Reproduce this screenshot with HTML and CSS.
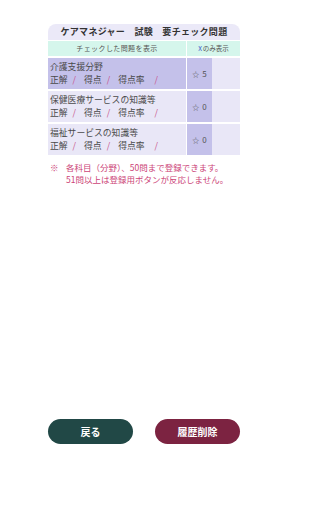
FILE: index.html
```html
<!DOCTYPE html>
<html lang="ja">
<head>
<meta charset="utf-8">
<link rel="stylesheet" href="styles.css">
</head>
<body>
<div class="page">
  <div class="panel">
    <div class="title">ケアマネジャー　試験　要チェック問題</div>
    <div class="head">
      <div class="head-left">チェックした問題を表示</div>
      <div class="head-right"><span class="x">X</span>のみ表示</div>
    </div>
    <div class="row selected">
      <div class="cell-main">
        <div class="name">介護支援分野</div>
        <div class="stats"><span>正解</span><span class="sl s1">/</span><span>得点</span><span class="sl s1">/</span><span>得点率</span><span class="sl s2">/</span></div>
      </div>
      <div class="cell-star"><span class="star">☆</span><span class="num">5</span></div>
      <div class="cell-end"></div>
    </div>
    <div class="row">
      <div class="cell-main">
        <div class="name">保健医療サービスの知識等</div>
        <div class="stats"><span>正解</span><span class="sl s1">/</span><span>得点</span><span class="sl s1">/</span><span>得点率</span><span class="sl s2">/</span></div>
      </div>
      <div class="cell-star"><span class="star">☆</span><span class="num">0</span></div>
      <div class="cell-end"></div>
    </div>
    <div class="row">
      <div class="cell-main">
        <div class="name">福祉サービスの知識等</div>
        <div class="stats"><span>正解</span><span class="sl s1">/</span><span>得点</span><span class="sl s1">/</span><span>得点率</span><span class="sl s2">/</span></div>
      </div>
      <div class="cell-star"><span class="star">☆</span><span class="num">0</span></div>
      <div class="cell-end"></div>
    </div>
  </div>
  <div class="note">
    <span class="mark">※</span>
    <div class="note-text">
      <div class="note-line">各科目（分野）、50問まで登録できます。</div>
      <div class="note-line">51問以上は登録用ボタンが反応しません。</div>
    </div>
  </div>
  <div class="buttons">
    <button class="btn back">戻る</button>
    <button class="btn del">履歴削除</button>
  </div>
</div>
</body>
</html>
```

FILE: styles.css
```css
html, body {
  margin: 0;
  padding: 0;
  background: #ffffff;
}
body {
  font-family: "Noto Sans CJK JP", "Noto Sans", sans-serif;
  color: #4a4a4a;
}
.page {
  width: 288px;
  height: 512px;
  box-sizing: border-box;
  padding: 24px 48px 68px;
  display: flex;
  flex-direction: column;
}
.panel {
  display: flex;
  flex-direction: column;
  gap: 2px;
}
.title {
  background: #ebe9f8;
  border-radius: 8px 8px 0 0;
  height: 16px;
  line-height: 16px;
  text-align: center;
  font-size: 9px;
  font-weight: bold;
  color: #333333;
  letter-spacing: 0.3px;
  margin-bottom: -1px;
}
.head {
  display: flex;
  gap: 1px;
  height: 15px;
}
.head-left {
  flex: 1;
  background: #d5f6ec;
  font-size: 7px;
  line-height: 15px;
  text-align: center;
  color: #555555;
  letter-spacing: 0.4px;
}
.head-right {
  width: 53px;
  background: #d5f6ec;
  font-size: 6.5px;
  line-height: 15px;
  text-align: center;
  color: #555555;
}
.x {
  color: #3a55c8;
  margin-right: 1px;
}
.row {
  display: flex;
  height: 31px;
  background: #e9e7f7;
}
.cell-main {
  flex: 1;
  padding: 3px 0 0 2px;
  box-sizing: border-box;
  border-right: 1px solid #ffffff;
}
.row.selected .cell-main {
  background: #c4c1ea;
}
.name {
  font-size: 8.8px;
  line-height: 12.5px;
  color: #4a4a4a;
}
.stats {
  font-size: 8.8px;
  line-height: 12.5px;
  display: flex;
  align-items: center;
  color: #4a4a4a;
}
.sl {
  color: #c8508a;
  margin-left: 5px;
  margin-right: 8px;
}
.sl.s2 {
  margin-left: 10px;
}
.cell-star {
  width: 25px;
  background: #c4c1ea;
  color: #555555;
  display: flex;
  align-items: center;
  justify-content: center;
  gap: 3px;
}
.star {
  font-size: 7px;
  line-height: 10px;
}
.num {
  font-size: 8px;
  line-height: 10px;
}
.cell-end {
  width: 28px;
}
.note {
  display: flex;
  margin-top: 7px;
  padding-left: 2px;
  color: #cc4477;
  font-size: 8.5px;
}
.note-line {
  line-height: 11.5px;
  white-space: nowrap;
}
.mark {
  width: 16px;
  flex: none;
  line-height: 11.5px;
}
.buttons {
  margin-top: auto;
  display: flex;
  justify-content: space-between;
}
.btn {
  width: 85px;
  height: 25px;
  border: none;
  border-radius: 13px;
  font-family: "Noto Sans CJK JP", sans-serif;
  font-size: 10px;
  font-weight: bold;
  color: #ffffff;
  padding: 0;
}
.back {
  background: #214846;
}
.del {
  background: #7c2341;
}
```
